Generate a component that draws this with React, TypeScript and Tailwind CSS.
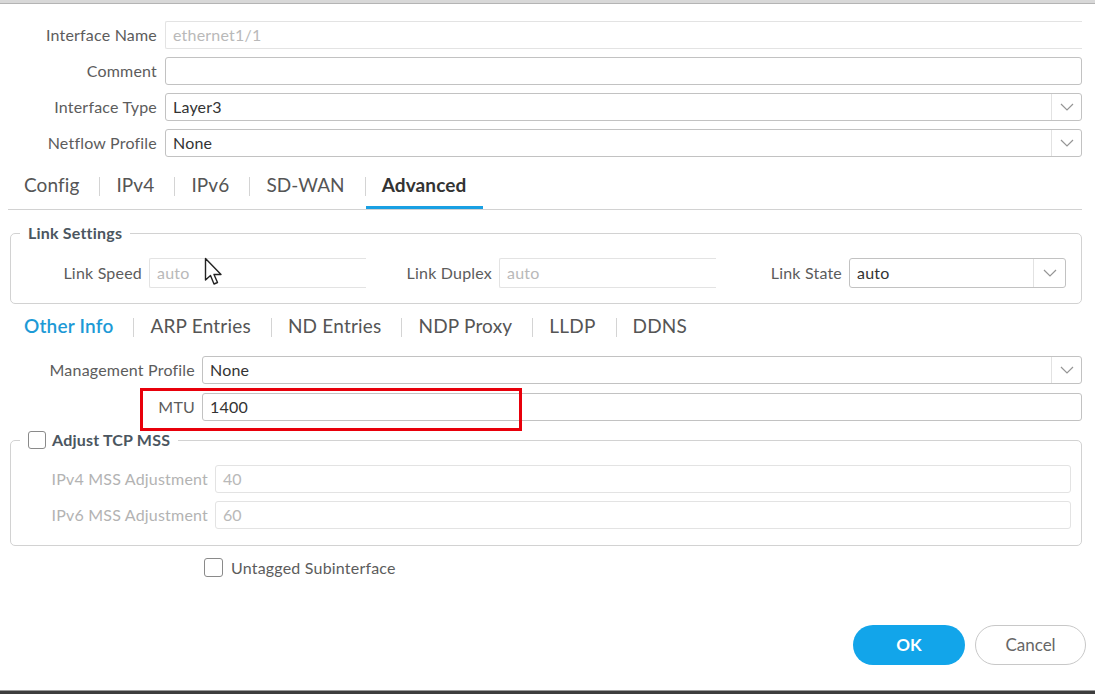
import React from "react";

const font = { fontFamily: "Lato, 'Open Sans', 'Liberation Sans', sans-serif" };

function Chevron() {
  return (
    <svg width="14" height="8" viewBox="0 0 14 8" fill="none">
      <polyline points="1,1 7,7 13,1" stroke="#959595" strokeWidth="1.2" />
    </svg>
  );
}

function TextBox({ value, disabled, className = "" }: { value?: string; disabled?: boolean; className?: string }) {
  if (disabled) {
    return (
      <div className={`h-full flex items-center pl-[7px] border border-r-0 border-[#e3e3e3] rounded-l-[2px] text-[16px] tracking-[0.2px] text-[#b9b9b9] ${className}`}>
        {value}
      </div>
    );
  }
  return (
    <div className={`h-full flex items-center pl-[7px] border border-[#c2c2c2] rounded-[3px] text-[16px] tracking-[0.2px] text-[#333] bg-white ${className}`}>
      {value}
    </div>
  );
}

function SelectBox({ value, arrowW = 30, className = "" }: { value: string; arrowW?: number; className?: string }) {
  return (
    <div className={`h-full flex border border-[#c2c2c2] rounded-[3px] bg-white ${className}`}>
      <div className="flex-1 flex items-center pl-[7px] text-[16px] tracking-[0.2px] text-[#333]">{value}</div>
      <div className="flex items-center justify-center border-l border-[#e2e2e2]" style={{ width: arrowW }}>
        <Chevron />
      </div>
    </div>
  );
}

function Checkbox({ size = 18 }: { size?: number }) {
  return (
    <div
      className="border-[1.5px] border-[#8a8a8a] rounded-[3px] bg-white shrink-0"
      style={{ width: size, height: size }}
    />
  );
}

function Sep() {
  return <div className="w-px h-[19px] bg-[#d4d4d4] mt-[8px] shrink-0" />;
}

function Tabs({ items, active, activeStyle }: { items: string[]; active: number; activeStyle: "underline" | "blue" }) {
  const track = activeStyle === "blue" ? "tracking-[0.2px]" : "tracking-[0.1px]";
  return (
    <>
      {items.map((t, i) => (
        <React.Fragment key={t}>
          {i > 0 && <Sep />}
          <div
            className={
              `pt-[5px] text-[19px] leading-[22px] ${track} ` +
              (i === active
                ? activeStyle === "underline"
                  ? "pl-4 pr-[17px] font-bold text-[#333] border-b-[3px] border-[#19a0e3]"
                  : "pl-4 pr-5 font-semibold text-[#1d9ad6]"
                : "pl-4 pr-5 text-[#555]")
            }
          >
            {t}
          </div>
        </React.Fragment>
      ))}
    </>
  );
}

const labelCls = "text-[16px] tracking-[0.2px] text-[#5c5c5c]";

export default function App() {
  return (
    <div className="relative w-[1095px] h-[694px] bg-white flex flex-col overflow-hidden" style={font}>
      <div className="h-[4px] bg-[#d8d8d8] border-b border-[#b4b4b4]" />

      {/* top fields */}
      <div className="pt-[17px] pr-[13px] flex flex-col gap-[8px]">
        {[
          { label: "Interface Name", el: <TextBox value="ethernet1/1" disabled /> },
          { label: "Comment", el: <TextBox /> },
          { label: "Interface Type", el: <SelectBox value="Layer3" /> },
          { label: "Netflow Profile", el: <SelectBox value="None" /> },
        ].map((r) => (
          <div key={r.label} className="flex items-center h-[28px] gap-[8px]">
            <div className={`w-[157px] text-right shrink-0 ${labelCls}`}>{r.label}</div>
            <div className="flex-1 h-full">{r.el}</div>
          </div>
        ))}
      </div>

      {/* main tabs */}
      <div className="mt-[12px] ml-[8px] mr-[13px] h-[41px] flex items-stretch border-b border-[#d2d2d2]">
        <Tabs items={["Config", "IPv4", "IPv6", "SD-WAN", "Advanced"]} active={4} activeStyle="underline" />
      </div>

      {/* link settings */}
      <fieldset className="mt-[13px] ml-[10px] mr-[13px] border border-[#d2d2d2] rounded-[5px] p-0">
        <legend className="ml-[9px] px-[8px] text-[16px] leading-[20px] tracking-[0.2px] font-bold text-[#4b5660]">
          Link Settings
        </legend>
        <div className="grid grid-cols-3 pl-[5px] pr-[15px] pt-[15px] pb-[15px]">
          {[
            { label: "Link Speed", el: <TextBox value="auto" disabled /> },
            { label: "Link Duplex", el: <TextBox value="auto" disabled /> },
            { label: "Link State", el: <SelectBox value="auto" arrowW={32} /> },
          ].map((c) => (
            <div key={c.label} className="flex items-center justify-end gap-[7px] h-[30px]">
              <div className={labelCls}>{c.label}</div>
              <div className="w-[217px] h-full">{c.el}</div>
            </div>
          ))}
        </div>
      </fieldset>

      {/* sub tabs */}
      <div className="mt-[6px] ml-[8px] h-[25px] flex items-stretch">
        <Tabs items={["Other Info", "ARP Entries", "ND Entries", "NDP Proxy", "LLDP", "DDNS"]} active={0} activeStyle="blue" />
      </div>

      <div className="mt-[21px] pr-[13px] flex flex-col gap-[9px]">
        <div className="flex items-center h-[28px] gap-[7px]">
          <div className={`w-[195px] text-right shrink-0 ${labelCls}`}>Management Profile</div>
          <div className="flex-1 h-full">
            <SelectBox value="None" />
          </div>
        </div>
        <div className="flex items-center h-[28px] gap-[7px]">
          <div className={`w-[195px] text-right shrink-0 ${labelCls}`}>MTU</div>
          <div className="flex-1 h-full">
            <TextBox value="1400" />
          </div>
        </div>
      </div>

      {/* adjust tcp mss */}
      <fieldset className="mt-[9px] ml-[10px] mr-[13px] border border-[#d2d2d2] rounded-[5px] p-0">
        <legend className="ml-[9px] px-[8px] h-[20px] flex items-center gap-[6px]">
          <Checkbox />
          <span className="text-[16px] leading-[20px] tracking-[0.2px] font-bold text-[#4b5660]">Adjust TCP MSS</span>
        </legend>
        <div className="pt-[15px] pb-[16px] pr-[10px] flex flex-col gap-[8px]">
          {[
            { label: "IPv4 MSS Adjustment", v: "40" },
            { label: "IPv6 MSS Adjustment", v: "60" },
          ].map((r) => (
            <div key={r.label} className="flex items-center h-[28px] gap-[7px]">
              <div className="w-[197px] text-right text-[16px] tracking-[0.2px] text-[#b3b3b3] shrink-0">{r.label}</div>
              <div className="flex-1 h-full flex items-center pl-[7px] border border-[#e3e3e3] rounded-[3px] text-[16px] text-[#b9b9b9]">
                {r.v}
              </div>
            </div>
          ))}
        </div>
      </fieldset>

      <div className="mt-[12px] pl-[204px] flex items-center gap-[8px] h-[19px]">
        <Checkbox size={19} />
        <span className={labelCls}>Untagged Subinterface</span>
      </div>

      <div className="mt-[48px] pr-[9px] flex justify-end gap-[10px]">
        <button className="w-[112px] h-[40px] rounded-full bg-[#12a5ea] text-white font-bold text-[17px]">OK</button>
        <button className="w-[111px] h-[40px] rounded-full bg-white border border-[#c8c8c8] text-[#666] text-[17px]">
          Cancel
        </button>
      </div>

      <div className="flex-1" />
      <div className="h-[4px] bg-[#3d3d3d] border-t border-[#9a9a9a]" />

      {/* highlight box */}
      <div className="absolute left-[140px] top-[388px] w-[382px] h-[43px] border-[3px] border-[#e8000b] pointer-events-none" />

      {/* mouse pointer */}
      <svg className="absolute left-[204px] top-[257px]" width="20" height="30" viewBox="0 0 20 30">
        <path
          d="M1.5 1.5 L1.5 23 L6.5 18.5 L10 27 L13.5 25.5 L10 17.5 L17 17.5 Z"
          fill="white"
          stroke="#222"
          strokeWidth="1.4"
          strokeLinejoin="round"
        />
      </svg>
    </div>
  );
}
